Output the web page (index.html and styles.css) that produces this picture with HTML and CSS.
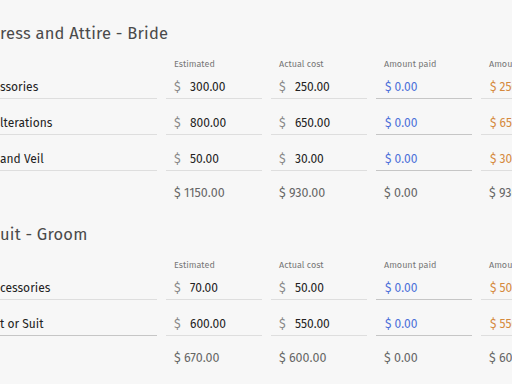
FILE: index.html
```html
<!DOCTYPE html>
<html>
<head>
<meta charset="utf-8">
<link rel="stylesheet" href="styles.css">
</head>
<body>
<div class="page">
  <section class="budget">
    <h2 class="title">ress and Attire - Bride</h2>
    <div class="row head">
      <div></div>
      <div class="hcell">Estimated</div>
      <div class="hcell">Actual cost</div>
      <div class="hcell">Amount paid</div>
      <div class="hcell">Amount due</div>
    </div>
    <div class="row item">
      <div class="label">ssories</div>
      <div class="field"><span class="cur">$</span><span class="val">300.00</span></div>
      <div class="field"><span class="cur">$</span><span class="val">250.00</span></div>
      <div class="field paid dark">$ 0.00</div>
      <div class="field due">$ 250.00</div>
    </div>
    <div class="row item">
      <div class="label">lterations</div>
      <div class="field"><span class="cur">$</span><span class="val">800.00</span></div>
      <div class="field"><span class="cur">$</span><span class="val">650.00</span></div>
      <div class="field paid dark">$ 0.00</div>
      <div class="field due">$ 650.00</div>
    </div>
    <div class="row item">
      <div class="label">and Veil</div>
      <div class="field"><span class="cur">$</span><span class="val">50.00</span></div>
      <div class="field"><span class="cur">$</span><span class="val">30.00</span></div>
      <div class="field paid dark">$ 0.00</div>
      <div class="field due">$ 30.00</div>
    </div>
    <div class="row total">
      <div></div>
      <div class="sum">$ 1150.00</div>
      <div class="sum">$ 930.00</div>
      <div class="sum">$ 0.00</div>
      <div class="sum">$ 930.00</div>
    </div>
  </section>

  <section class="budget">
    <h2 class="title">uit - Groom</h2>
    <div class="row head">
      <div></div>
      <div class="hcell">Estimated</div>
      <div class="hcell">Actual cost</div>
      <div class="hcell">Amount paid</div>
      <div class="hcell">Amount due</div>
    </div>
    <div class="row item">
      <div class="label">cessories</div>
      <div class="field"><span class="cur">$</span><span class="val">70.00</span></div>
      <div class="field"><span class="cur">$</span><span class="val">50.00</span></div>
      <div class="field paid dark">$ 0.00</div>
      <div class="field due">$ 50.00</div>
    </div>
    <div class="row item">
      <div class="label dark">t or Suit</div>
      <div class="field"><span class="cur">$</span><span class="val">600.00</span></div>
      <div class="field"><span class="cur">$</span><span class="val">550.00</span></div>
      <div class="field paid dark">$ 0.00</div>
      <div class="field due">$ 550.00</div>
    </div>
    <div class="row total">
      <div></div>
      <div class="sum">$ 670.00</div>
      <div class="sum">$ 600.00</div>
      <div class="sum">$ 0.00</div>
      <div class="sum">$ 600.00</div>
    </div>
  </section>
</div>
</body>
</html>
```

FILE: styles.css
```css
html, body {
  margin: 0;
  padding: 0;
  background: #f7f7f7;
  overflow: hidden;
}
body {
  font-family: "Fira Sans", Lato, "Noto Sans", sans-serif;
  color: #222;
  width: 512px;
  height: 384px;
}
.page {
  width: 640px;
  padding-top: 22px;
  display: flex;
  flex-direction: column;
  gap: 20px;
}
.budget {
  display: flex;
  flex-direction: column;
}
.title {
  margin: 0 0 12px 0;
  font-size: 16.5px;
  line-height: 24px;
  font-weight: 400;
  color: #4a4a4a;
  letter-spacing: 0.2px;
  white-space: nowrap;
}
.row {
  display: grid;
  grid-template-columns: 157px 96px 96px 96px 96px;
  column-gap: 9px;
}
.head {
  height: 12px;
  line-height: 12px;
  font-size: 9px;
  color: #777;
  margin-bottom: 6px;
}
.hcell {
  padding-left: 8px;
  white-space: nowrap;
}
.item {
  height: 23px;
  line-height: 22px;
  font-size: 12px;
  margin-bottom: 13px;
}
.item + .total {
  margin-top: -1px;
}
.label {
  border-bottom: 1px solid #dedede;
  font-weight: 400;
  color: #222;
  white-space: nowrap;
}
.field {
  border-bottom: 1px solid #dedede;
  padding-left: 8px;
  white-space: nowrap;
  display: flex;
  align-items: center;
}
.label.dark, .field.dark {
  border-bottom-color: #c6c6c6;
}
.cur {
  color: #888;
  width: 16px;
  font-size: 12.5px;
}
.val {
  font-weight: 400;
  color: #222;
}
.paid {
  color: #4b6fd9;
  padding-left: 9px;
}
.due {
  color: #d5893d;
  padding-left: 9px;
}
.total {
  height: 20px;
  line-height: 20px;
  font-size: 12.5px;
  color: #666;
}
.sum {
  padding-left: 8px;
  white-space: nowrap;
}
```
